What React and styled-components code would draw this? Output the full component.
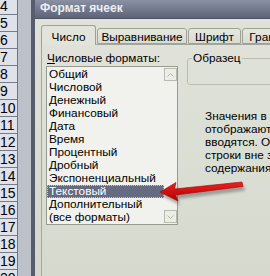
import React from 'react'
import styled, { createGlobalStyle } from 'styled-components'

const GlobalStyle = createGlobalStyle`
  html, body {
    margin: 0;
    padding: 0;
  }
  body {
    width: 270px;
    height: 276px;
    overflow: hidden;
    background: #d7dbcf;
  }
`

const Screen = styled.div`
  position: relative;
  display: flex;
  width: 270px;
  height: 276px;
  overflow: hidden;
  font-family: 'Liberation Sans', Arial, sans-serif;
`

const RowHeaders = styled.div`
  flex: 0 0 17px;
  display: flex;
  flex-direction: column;
  margin-top: -2px;
  background: #dfe2e9;
  border-right: 1px solid #6f7585;
`

const RowHeader = styled.div`
  flex: 0 0 17px;
  box-sizing: border-box;
  border-bottom: 1px solid #777d8d;
  font-size: 14px;
  line-height: 16px;
  color: #000;
  white-space: nowrap;
  overflow: hidden;
`

const SheetEdge = styled.div`
  flex: 0 0 13px;
  background: #bdc1ca;
`

const WindowFrame = styled.div`
  flex: 1;
  min-width: 0;
  display: flex;
  flex-direction: column;
  border-left: 4px solid #575d6d;
`

const TitleBar = styled.div`
  flex: 0 0 18px;
  background: linear-gradient(#8a91a3, #5d6477);
  border-bottom: 1px solid #4d5363;
  color: #eceef2;
  font-weight: bold;
  font-size: 12px;
  line-height: 17px;
  padding-left: 5px;
  white-space: nowrap;
`

const Body = styled.div`
  flex: 1;
  padding: 6px 0 0 6px;
  background: linear-gradient(#dfe2d9, #d3d7cb);
  font-size: 11.8px;
  color: #000;
`

const TabRow = styled.div`
  display: flex;
  align-items: flex-end;
  gap: 1px;
  height: 19px;
  position: relative;
  z-index: 1;
`

const Tab = styled.div`
  flex: 0 0 ${p => p.$width}px;
  box-sizing: border-box;
  height: ${p => (p.$active ? 20 : 16)}px;
  margin-bottom: ${p => (p.$active ? -1 : 0)}px;
  padding-top: ${p => (p.$active ? 5 : 2)}px;
  border: 1px solid #9ea294;
  border-bottom: ${p => (p.$active ? 'none' : '1px solid #9ea294')};
  border-radius: 3px 3px 0 0;
  background: ${p => (p.$active ? '#e2e4db' : 'linear-gradient(#e6e8e0, #d9dcd2)')};
  text-align: center;
  line-height: 12px;
  white-space: nowrap;
  overflow: hidden;
`

const Panel = styled.div`
  display: flex;
  gap: 9px;
  height: 240px;
  padding: 7px 0 0 4px;
  border: 1px solid #a3a79b;
  border-right: none;
  background: linear-gradient(#e0e2d9, #d5d9cd);
`

const FormatColumn = styled.div`
  flex: 0 0 132px;
  display: flex;
  flex-direction: column;
  gap: 1px;
`

const FieldLabel = styled.div`
  padding-left: 1px;
  line-height: 13px;
  white-space: nowrap;

  u {
    text-decoration: underline;
  }
`

const ListBox = styled.div`
  display: flex;
  box-sizing: border-box;
  height: 159px;
  border: 1px solid #979b90;
  background: #f1f2ed;
`

const Items = styled.div`
  flex: 1;
  min-width: 0;
  padding-top: 1px;
`

const Item = styled.div`
  box-sizing: border-box;
  height: 13px;
  line-height: 13px;
  padding-left: 2px;
  white-space: nowrap;
  overflow: hidden;
  color: ${p => (p.$selected ? '#fff' : '#000')};
  background: ${p => (p.$selected ? '#656b80' : 'transparent')};
  outline: ${p => (p.$selected ? '1px dotted #c9ccd6' : 'none')};
  outline-offset: -1px;
`

const ScrollBar = styled.div`
  flex: 0 0 13px;
  display: flex;
  flex-direction: column;
  justify-content: space-between;
  padding: 1px 0;
`

const ScrollButton = styled.div`
  display: flex;
  align-items: center;
  justify-content: center;
  box-sizing: border-box;
  height: 13px;
  border: 1px solid #b7bbaf;
  background: #eceee6;
`

const SampleColumn = styled.div`
  flex: 1;
  min-width: 0;
`

const SampleBox = styled.fieldset`
  box-sizing: border-box;
  width: 110px;
  height: 33px;
  margin: 0;
  padding: 0 0 0 4px;
  border: 1px solid #babeb2;
  border-radius: 3px;
  line-height: 13px;

  legend {
    padding: 0 1px;
  }
`

const Description = styled.div`
  margin-top: 25px;
  padding-left: 18px;
  line-height: 13px;
  white-space: nowrap;
`

const ArrowMark = styled.svg`
  position: absolute;
  left: 154px;
  top: 175px;
  width: 100px;
  height: 34px;
  pointer-events: none;
`

const rows = Array.from({ length: 17 }, (_, i) => i + 4)

const formats = [
  'Общий',
  'Числовой',
  'Денежный',
  'Финансовый',
  'Дата',
  'Время',
  'Процентный',
  'Дробный',
  'Экспоненциальный',
  'Текстовый',
  'Дополнительный',
  '(все форматы)'
]

const descriptionLines = [
  'Значения в текстовом формате',
  'отображаются точно так же, как',
  'вводятся. Они обрабатываются как',
  'строки вне зависимости от их',
  'содержания.'
]

const Chevron = ({ down }) => (
  <svg width="7" height="4" viewBox="0 0 7 4">
    <polyline
      points={down ? '0.5,0.5 3.5,3.5 6.5,0.5' : '0.5,3.5 3.5,0.5 6.5,3.5'}
      fill="none"
      stroke="#b3b7ab"
      strokeWidth="1"
    />
  </svg>
)

const App = () => {
  return (
    <>
      <GlobalStyle />
      <Screen>
        <RowHeaders>
          {rows.map(n => (
            <RowHeader key={n}>{n}</RowHeader>
          ))}
        </RowHeaders>
        <SheetEdge />
        <WindowFrame>
          <TitleBar>Формат ячеек</TitleBar>
          <Body>
            <TabRow>
              <Tab $active $width={55}>Число</Tab>
              <Tab $width={90}>Выравнивание</Tab>
              <Tab $width={53}>Шрифт</Tab>
              <Tab $width={60}>Граница</Tab>
            </TabRow>
            <Panel>
              <FormatColumn>
                <FieldLabel>
                  <u>Ч</u>исловые форматы:
                </FieldLabel>
                <ListBox>
                  <Items>
                    {formats.map(f => (
                      <Item key={f} $selected={f === 'Текстовый'}>
                        {f}
                      </Item>
                    ))}
                  </Items>
                  <ScrollBar>
                    <ScrollButton>
                      <Chevron />
                    </ScrollButton>
                    <ScrollButton>
                      <Chevron down />
                    </ScrollButton>
                  </ScrollBar>
                </ListBox>
              </FormatColumn>
              <SampleColumn>
                <SampleBox>
                  <legend>Образец</legend>
                </SampleBox>
                <Description>
                  {descriptionLines.map(line => (
                    <div key={line}>{line}</div>
                  ))}
                </Description>
              </SampleColumn>
            </Panel>
          </Body>
        </WindowFrame>

        <ArrowMark viewBox="0 0 100 34">
          <defs>
            <filter id="arrowShadow" x="-20%" y="-50%" width="140%" height="200%">
              <feGaussianBlur stdDeviation="1.5" />
            </filter>
            <linearGradient id="arrowFill" x1="0" y1="0" x2="0" y2="1">
              <stop offset="0" stopColor="#f02020" />
              <stop offset="1" stopColor="#b00000" />
            </linearGradient>
          </defs>
          <path
            d="M6 17 L22 7.5 L20.5 14 L88 7 L89 11.5 L21.5 20 L24 26 Z"
            fill="#4a4a4a"
            opacity="0.45"
            transform="translate(2 4)"
            filter="url(#arrowShadow)"
          />
          <path
            d="M6 17 L22 7.5 L20.5 14 L88 7 L89 11.5 L21.5 20 L24 26 Z"
            fill="url(#arrowFill)"
            stroke="#a00000"
            strokeWidth="0.6"
            strokeLinejoin="round"
          />
        </ArrowMark>
      </Screen>
    </>
  )
}

export default App
